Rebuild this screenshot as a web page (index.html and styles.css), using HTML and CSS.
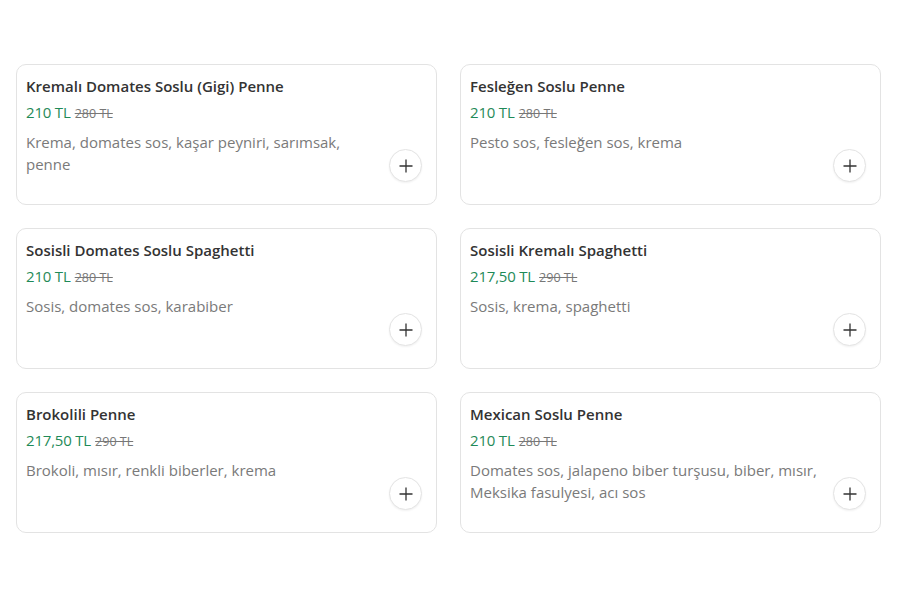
FILE: index.html
```html
<!DOCTYPE html>
<html lang="tr">
<head>
<meta charset="utf-8">
<link rel="stylesheet" href="styles.css">
</head>
<body>
<div class="grid">
  <div class="card">
    <div class="info">
      <div class="name">Kremalı Domates Soslu (Gigi) Penne</div>
      <div class="price"><span class="now">210 TL</span> <span class="old">280 TL</span></div>
      <div class="desc">Krema, domates sos, kaşar peyniri, sarımsak, penne</div>
    </div>
    <button class="add"><svg viewBox="0 0 16 16" width="16" height="16"><path d="M8 1.5v13M1.5 8h13" stroke="#333" stroke-width="1.3" fill="none"/></svg></button>
  </div>
  <div class="card">
    <div class="info">
      <div class="name">Fesleğen Soslu Penne</div>
      <div class="price"><span class="now">210 TL</span> <span class="old">280 TL</span></div>
      <div class="desc">Pesto sos, fesleğen sos, krema</div>
    </div>
    <button class="add"><svg viewBox="0 0 16 16" width="16" height="16"><path d="M8 1.5v13M1.5 8h13" stroke="#333" stroke-width="1.3" fill="none"/></svg></button>
  </div>
  <div class="card">
    <div class="info">
      <div class="name">Sosisli Domates Soslu Spaghetti</div>
      <div class="price"><span class="now">210 TL</span> <span class="old">280 TL</span></div>
      <div class="desc">Sosis, domates sos, karabiber</div>
    </div>
    <button class="add"><svg viewBox="0 0 16 16" width="16" height="16"><path d="M8 1.5v13M1.5 8h13" stroke="#333" stroke-width="1.3" fill="none"/></svg></button>
  </div>
  <div class="card">
    <div class="info">
      <div class="name">Sosisli Kremalı Spaghetti</div>
      <div class="price"><span class="now">217,50 TL</span> <span class="old">290 TL</span></div>
      <div class="desc">Sosis, krema, spaghetti</div>
    </div>
    <button class="add"><svg viewBox="0 0 16 16" width="16" height="16"><path d="M8 1.5v13M1.5 8h13" stroke="#333" stroke-width="1.3" fill="none"/></svg></button>
  </div>
  <div class="card">
    <div class="info">
      <div class="name">Brokolili Penne</div>
      <div class="price"><span class="now">217,50 TL</span> <span class="old">290 TL</span></div>
      <div class="desc">Brokoli, mısır, renkli biberler, krema</div>
    </div>
    <button class="add"><svg viewBox="0 0 16 16" width="16" height="16"><path d="M8 1.5v13M1.5 8h13" stroke="#333" stroke-width="1.3" fill="none"/></svg></button>
  </div>
  <div class="card">
    <div class="info">
      <div class="name">Mexican Soslu Penne</div>
      <div class="price"><span class="now">210 TL</span> <span class="old">280 TL</span></div>
      <div class="desc">Domates sos, jalapeno biber turşusu, biber, mısır, Meksika fasulyesi, acı sos</div>
    </div>
    <button class="add"><svg viewBox="0 0 16 16" width="16" height="16"><path d="M8 1.5v13M1.5 8h13" stroke="#333" stroke-width="1.3" fill="none"/></svg></button>
  </div>
</div>
</body>
</html>
```
FILE: styles.css
```css
html, body {
  margin: 0;
  padding: 0;
  background: #fff;
}
body {
  font-family: "Open Sans", "Noto Sans", sans-serif;
  color: #333;
}
.grid {
  display: grid;
  grid-template-columns: 421px 421px;
  column-gap: 23px;
  row-gap: 23px;
  padding: 64px 0 0 16px;
}
.card {
  box-sizing: border-box;
  height: 141px;
  border: 1px solid #e3e3e3;
  border-radius: 10px;
  padding: 11px 14px 22px 9px;
  display: flex;
  align-items: flex-end;
  gap: 12px;
}
.info {
  flex: 1;
  align-self: flex-start;
}
.name {
  font-size: 15px;
  font-weight: 600;
  line-height: 20px;
  color: #333;
}
.price {
  margin-top: 6px;
  line-height: 20px;
}
.now {
  font-size: 15px;
  color: #1f8a58;
  letter-spacing: -0.2px;
}
.old {
  font-size: 12.5px;
  color: #777;
  text-decoration: line-through;
}
.desc {
  margin-top: 7px;
  font-size: 15px;
  line-height: 22px;
  color: #7a7a7a;
}
.add {
  flex: none;
  width: 33px;
  height: 33px;
  border-radius: 50%;
  border: 1px solid #e4e4e4;
  background: #fff;
  padding: 0;
  display: flex;
  align-items: center;
  justify-content: center;
  box-shadow: 0 1px 2px rgba(0,0,0,0.06);
}
```
